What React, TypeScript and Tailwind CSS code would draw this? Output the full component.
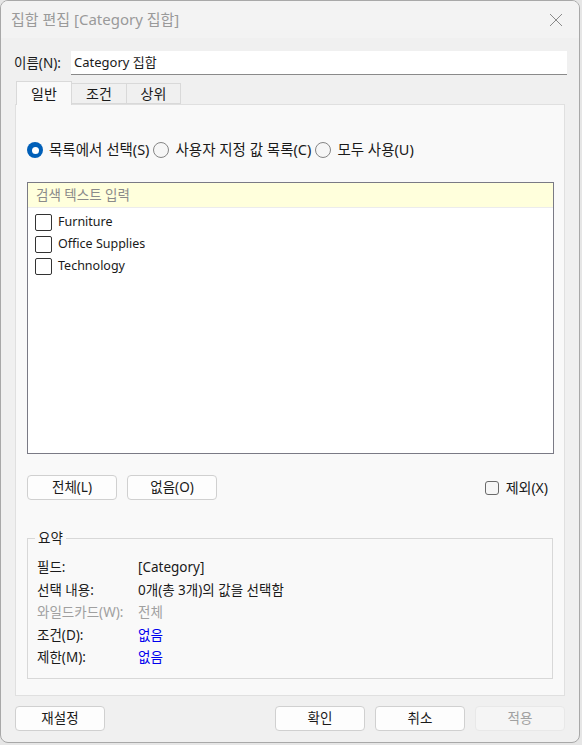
import React from "react";

const font = { fontFamily: '"Noto Sans", "Noto Sans CJK KR", sans-serif' };

function Radio({ checked, label }: { checked?: boolean; label: string }) {
  return (
    <label className="flex items-center gap-[6px]">
      {checked ? (
        <span className="w-[16px] h-[16px] rounded-full bg-[#005fb8] flex items-center justify-center">
          <span className="w-[7px] h-[7px] rounded-full bg-white" />
        </span>
      ) : (
        <span className="w-[16px] h-[16px] rounded-full border border-[#858585] bg-[#f6f6f6]" />
      )}
      <span className="text-[14.5px]">{label}</span>
    </label>
  );
}

function Btn({ children, className = "", disabled }: { children: React.ReactNode; className?: string; disabled?: boolean }) {
  return (
    <button
      className={`h-[25px] w-[90px] rounded-[4px] border text-[13.5px] leading-none ${
        disabled ? "border-[#e8e8e8] bg-[#f5f5f5] text-[#a0a0a0]" : "border-[#d0d0d0] bg-[#fdfdfd] text-[#1a1a1a]"
      } ${className}`}
    >
      {children}
    </button>
  );
}

export default function App() {
  const items = ["Furniture", "Office Supplies", "Technology"];
  const summary = [
    { k: "필드:", v: "[Category]", gray: false, blue: false },
    { k: "선택 내용:", v: "0개(총 3개)의 값을 선택함", gray: false, blue: false },
    { k: "와일드카드(W):", v: "전체", gray: true, blue: false },
    { k: "조건(D):", v: "없음", gray: false, blue: true },
    { k: "제한(M):", v: "없음", gray: false, blue: true },
  ];

  return (
    <div className="w-[582px] h-[745px] bg-[#e6e6e6]" style={font}>
      <div className="w-[580px] h-[743px] rounded-[8px] border border-[#a8a8a8] bg-[#f0f0f0] flex flex-col text-[13px] text-[#1a1a1a] overflow-hidden">
        {/* title bar */}
        <div className="h-[37px] flex items-center justify-between pl-[10px] pr-[16px] bg-[#f3f3f3]">
          <span className="text-[15px] text-[#9a9a9a]">집합 편집 [Category 집합]</span>
          <svg width="14" height="14" viewBox="0 0 14 14" className="text-[#8a8a8a]">
            <path d="M1 1L13 13M13 1L1 13" stroke="currentColor" strokeWidth="1" />
          </svg>
        </div>

        {/* name */}
        <div className="flex items-center mt-[13px] pl-[13px] pr-[12px]">
          <span className="w-[57px] text-[13.5px]">이름(N):</span>
          <div className="flex-1 h-[24px] bg-white border-b border-[#8a8a8a] flex items-center px-[3px] text-[13px]">
            Category 집합
          </div>
        </div>

        {/* tabs */}
        <div className="flex items-end mt-[5px] pl-[15px] h-[24px] text-[14px]">
          <div className="w-[56px] h-[24px] bg-[#f9f9f9] border border-b-0 border-[#d9d9d9] flex items-center justify-center relative z-10 -mb-px">
            일반
          </div>
          <div className="w-[55px] h-[21px] bg-[#f0f0f0] border border-l-0 border-[#d9d9d9] flex items-center justify-center">
            조건
          </div>
          <div className="w-[54px] h-[21px] bg-[#f0f0f0] border border-l-0 border-[#d9d9d9] flex items-center justify-center">
            상위
          </div>
        </div>

        {/* panel */}
        <div className="mx-[14px] h-[592px] bg-[#f9f9f9] border border-[#e0e0e0] flex flex-col px-[11px]">
          <div className="flex items-center mt-[36px] h-[18px]">
            <Radio checked label="목록에서 선택(S)" />
            <span className="w-[4px]" />
            <Radio label="사용자 지정 값 목록(C)" />
            <span className="w-[4px]" />
            <Radio label="모두 사용(U)" />
          </div>

          <div className="mt-[23px] h-[272px] w-[527px] border border-[#7a7a85] bg-white flex flex-col">
            <div className="h-[25px] bg-[#ffffdc] border-b border-[#ececec] flex items-center px-[8px] text-[#8a8a8a] text-[13.5px]">
              검색 텍스트 입력
            </div>
            <div className="flex flex-col pt-[3px]">
              {items.map((it) => (
                <div key={it} className="h-[22px] flex items-center pl-[7px] gap-[6px]">
                  <span className="w-[17px] h-[17px] border border-[#333] rounded-[2px] bg-white" />
                  <span className="text-[12.5px]">{it}</span>
                </div>
              ))}
            </div>
          </div>

          <div className="flex items-center mt-[21px]">
            <Btn>전체(L)</Btn>
            <Btn className="ml-[10px]">없음(O)</Btn>
            <div className="flex-1" />
            <label className="flex items-center gap-[7px] mr-[5px]">
              <span className="w-[14px] h-[14px] border border-[#6a6a6a] rounded-[3px] bg-[#f6f6f6]" />
              <span className="text-[14px]">제외(X)</span>
            </label>
          </div>

          <div className="relative mt-[38px] h-[141px] w-[526px] border border-[#d8d8d8] px-[9px] pt-[17px]">
            <span className="absolute left-[7px] -top-[10px] bg-[#f9f9f9] px-[3px] leading-[18px] text-[13.5px]">요약</span>
            {summary.map((r) => (
              <div key={r.k} className="flex items-center h-[22.5px] text-[13.5px]">
                <span className={`w-[101px] ${r.gray ? "text-[#a0a0a0]" : ""}`}>{r.k}</span>
                <span className={r.gray ? "text-[#a0a0a0]" : r.blue ? "text-[#0000ee]" : ""}>{r.v}</span>
              </div>
            ))}
          </div>
        </div>

        {/* bottom buttons */}
        <div className="flex items-center mt-[10px] px-[14px]">
          <Btn>재설정</Btn>
          <div className="flex-1" />
          <Btn>확인</Btn>
          <Btn className="ml-[10px]">취소</Btn>
          <Btn className="ml-[10px]" disabled>
            적용
          </Btn>
        </div>
      </div>
    </div>
  );
}
